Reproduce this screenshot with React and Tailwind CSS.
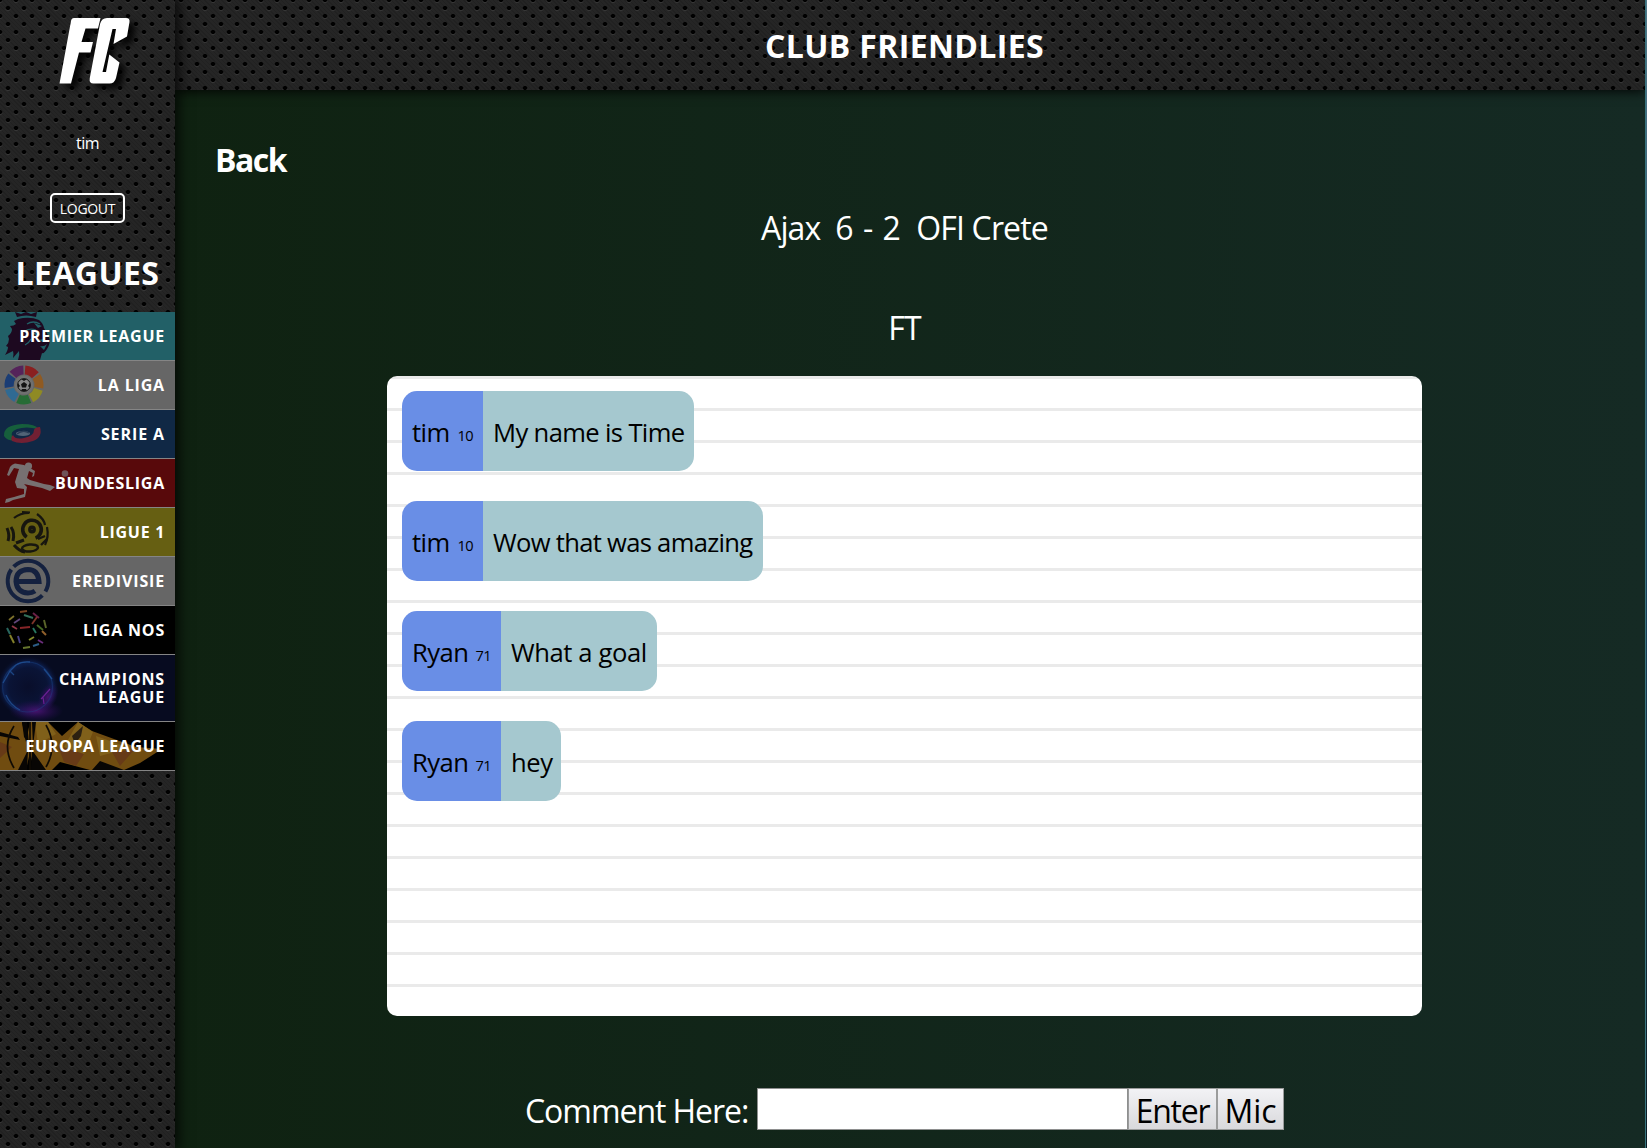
const DOTS =
  "bg-[#252525] bg-[radial-gradient(ellipse_2.8px_2.3px_at_center,#000_68%,#00000000_100%),radial-gradient(ellipse_2.8px_2.3px_at_center,#000_68%,#00000000_100%),radial-gradient(ellipse_3px_2.6px_at_center,#363636_60%,#36363600_100%),radial-gradient(ellipse_3px_2.6px_at_center,#363636_60%,#36363600_100%),repeating-linear-gradient(45deg,#0000001c_0_1px,transparent_1px_3px)] bg-size-[16px_16px,16px_16px,16px_16px,16px_16px,auto]";
const SIDE_POS = "bg-position-[-8px_-8px,0px_0px,-8px_-7px,0px_1px,0_0]";
const HEAD_POS = "bg-position-[-2px_-8px,6px_0px,-2px_-7px,6px_1px,0_0]";

function FcLogo() {
  return (
    <svg width="90" height="84" viewBox="0 0 90 84" className="drop-shadow-[6px_5px_3px_rgba(0,0,0,0.85)]" aria-label="FC">
      <g fill="#fff">
        <path d="M32 2 H58.500 L56 12.500 H43.500 L39.500 26 H51 L48.500 36.500 H37 L29 67.500 H17.500 L29 5 Q29.500 2 32 2Z" />
        <path d="M65 2 H84 Q88 2 87.500 6 L85 20.500 L71.500 28 L74 13 H70.500 L60.500 56 H64 L67.300 38.500 L77.500 46.500 L74 62 Q72.500 67.500 67.500 67.500 H51.500 Q47 67.500 47.700 62.500 L58 8 Q59.500 2 65 2Z" />
      </g>
    </svg>
  );
}

const S = ({ children, h = 48 }) => (
  <svg className="absolute left-0 top-0" width="175" height={h} viewBox={"0 0 175 " + h} fill="none">{children}</svg>
);

function Lion() {
  return (
    <S>
      <path fill="#1d0920" d="M15 0 L17 5 Q26 2 36 5 L37 0 L31 2 L26 0 L21 2Z" />
      <path fill="#1d0920" d="M18 7 Q30 4 39 8 Q43 11 44 16 L49 25 Q51 31 47 37 Q44 42 42 41 L40 48 H18 Q20 43 19 39 L13 46 Q14 42 13 39 L5 43 Q8 38 8 35 L6 34 Q9 31 9 27 L8 24 Q12 21 12 17 L10 14 Q14 14 16 12 L14 9Z" />
      <path stroke="#226067" strokeWidth="1.300" d="M27 12 Q33 8 40 12 M25 19 Q30 16 36 18 M31 27 Q29 31 25 33" />
      <path fill="#226067" d="M34 11 L42 14 L38 16Z M31 20 L40 22 L37 24Z M37 28 L45 27 L43 30Z M40 34 Q44 35 47 32 L44 38Z" />
    </S>
  );
}

function LaLiga() {
  const colors = ["#8a2020", "#8f5a22", "#8f8a24", "#276c35", "#2f6a93", "#1b3d75", "#55235a"];
  return (
    <S>
      {colors.map((c, i) => (
        <circle key={c} cx="24" cy="24" r="15" stroke={c} strokeWidth="9" pathLength="70" strokeDasharray="8.800 61.200" transform={"rotate(" + (-86 + i * 51.430) + " 24 24)"} />
      ))}
      <circle cx="24" cy="24" r="9.500" fill="#707070" />
      <circle cx="24" cy="24" r="6.400" fill="#898989" stroke="#151515" strokeWidth="1" />
      <path fill="#151515" d="M24 21 L27 23.200 L26 26.500 H22 L21 23.200Z M21 18 L27 18 L24 20Z M18 22 L20 25 L18 27Z M30 22 L28 25 L30 27Z M21 30 L22 28 L26 28 L27 30Z" />
    </S>
  );
}

function SerieA() {
  return (
    <S>
      <path fill="#165f3c" d="M4 26 Q3 15 22 14 Q36 14 38 19 Q26 16 17 19 Q9 22 13 27 L18 30 Q8 32 4 26Z" />
      <path fill="#722033" d="M40 17 Q43 27 33 31 Q21 35 12 31 Q10 28 13 25 Q15 30 24 28 Q34 26 34 20 Q35 17 40 17Z" />
      <ellipse cx="23" cy="23.500" rx="7" ry="2.600" fill="#526477" />
      <path stroke="#283c55" strokeWidth="1.300" d="M17 24 Q23 19 29 23" />
    </S>
  );
}

function Bundesliga() {
  return (
    <S>
      <g fill="#777071">
        <circle cx="28.500" cy="7" r="3.600" />
        <circle cx="65" cy="14.500" r="3.300" fill="#70545a" />
        <path d="M24 6 L15 4.500 Q12 5 10 8 L7 16 L9 17 L14 9 L19 10 L15 23 L17 29 L24 30 L24 35 L14 38 L6 40 L5 44 L9 43 L13 41 L25 38 L27 28 L24 25 L42 29 L50 32 L55 28 L50 26 L44 25 L30 21 L27 19 L29 12 L33 14 L32 18 L34 17 L35 12 L30 9Z" />
      </g>
    </S>
  );
}

function Ligue1() {
  return (
    <S>
      <g stroke="#17160f">
        <circle cx="32" cy="21.500" r="9.300" strokeWidth="3.600" pathLength="100" strokeDasharray="84 16" transform="rotate(125 32 21.500)" />
        <circle cx="32" cy="21.500" r="2.200" strokeWidth="3.400" />
        <path strokeWidth="2.200" d="M14 10 Q20 5 29 5 M22 4 L30 4.500 M37 6 Q44 11 45 17 M47 19 Q49 29 45 37" />
        <path strokeWidth="3" d="M11 19 Q15 25 13 33 M7 20 Q10 27 8 33 M16 35 L24 32 M14 37 Q19 43 25 44" />
        <ellipse cx="30" cy="40" rx="8" ry="3.500" strokeWidth="2.500" transform="rotate(-5 30 40)" />
        <path strokeWidth="2.400" d="M38 31 L45 28 M41 37 L47 31" />
      </g>
    </S>
  );
}

function Eredivisie() {
  return (
    <S>
      <g stroke="#14213f">
        <circle cx="28" cy="24" r="20.300" strokeWidth="4" pathLength="100" strokeDasharray="46 4 47 3" transform="rotate(-135 28 24)" />
        <path strokeWidth="5" d="M16 24.500 H39 Q38 12.500 28 12.500 Q16 13 16 24.500 Q17 35.500 28 36 Q32 36 35 34" />
        <path strokeWidth="2.600" d="M22 24 H39" />
      </g>
    </S>
  );
}

function LigaNos() {
  const dash = [["M9 14 L14 10", "#7e722c"], ["M20 6 L27 5", "#774221"], ["M33 7 L39 12", "#6b2148"], ["M14 17 L20 13", "#60467a"], ["M20 22 L30 21", "#862528"], ["M32 18 L37 11", "#7e3529"], ["M24 9 L33 12", "#337059"], ["M44 14 L46 22", "#5a652a"], ["M7 22 L10 28", "#28665e"], ["M10 29 L14 37", "#83802b"], ["M18 30 L20 37", "#474086"], ["M29 34 L34 31", "#848a2c"], ["M33 22 L36 27", "#277761"], ["M42 25 L46 29", "#92612b"], ["M38 34 L43 37", "#6b2d7b"], ["M23 42 L30 41", "#65752e"], ["M33 40 L39 38", "#2c5d87"], ["M12 20 L17 23", "#913846"], ["M37 19 L43 24", "#466824"]];
  return <S>{dash.map(([d, c]) => <path key={d} d={d} stroke={c} strokeWidth="1.900" />)}</S>;
}

function Champions() {
  return (
    <S h={66}>
      <defs>
        <radialGradient id="clGlow"><stop offset="0" stopColor="#090e2a" /><stop offset=".62" stopColor="#0a1436" /><stop offset=".8" stopColor="#0d1f4e" /><stop offset="1" stopColor="#080d28" stopOpacity="0" /></radialGradient>
        <radialGradient id="clPink"><stop offset="0" stopColor="#46126c" /><stop offset="1" stopColor="#2a0d58" stopOpacity="0" /></radialGradient>
      </defs>
      <circle cx="28" cy="32" r="31" fill="url(#clGlow)" />
      <ellipse cx="36" cy="56" rx="27" ry="11" fill="url(#clPink)" />
      <ellipse cx="48" cy="42" rx="9" ry="15" fill="url(#clPink)" transform="rotate(25 48 42)" />
      <circle cx="27.500" cy="32" r="25" stroke="#1c4b8c" strokeWidth="1.200" opacity=".35" />
      <path stroke="#2359a0" strokeWidth="1.300" opacity=".7" d="M3 28 L10 16 L16 10 M10 16 L14 20 M16 10 Q22 6 30 7 M44 14 L52 24 M6 40 Q10 50 20 55" />
      <path stroke="#6a2092" strokeWidth="1.200" d="M50 34 L43 42 L44 49 M43 42 L41 44" />
    </S>
  );
}

function Europa() {
  return (
    <S>
      <path fill="#704c10" d="M0 0 H22 L26 20 L30 0 H48 L62 14 L78 0 L92 9 L136 25 L162 27 L140 41 L124 48 H90 L60 40 L52 48 H34 L30 30 L26 48 H0Z" />
      <path fill="#80601a" d="M35 0 H48 L56 12 L38 22Z M78 0 L93 10 L84 32 L64 25Z M96 14 L130 26 L100 34Z" />
      <path fill="#673a17" d="M58 24 L84 32 L76 44 L64 40Z M0 20 L12 25 L0 36Z M112 30 L134 28 L120 44Z" />
      <path fill="#080604" d="M0 10 L18 15 L20 18 L0 14Z M22 0 H27 L29 22 L24 15Z M32 0 H36 L33 24Z M18 48 L28 28 L27 48Z M31 48 L32 28 L46 48Z M92 48 L100 39 L124 48Z" />
      <path stroke="#100b04" strokeWidth="1.700" d="M14 4 Q1 24 14 46 M46 3 Q58 24 46 45 M30 0 V48" />
      <path fill="#2b2011" d="M72 14 L83 4 L81 14 L75 22Z" />
    </S>
  );
}

const LEAGUES = [
  { name: "PREMIER LEAGUE", art: Lion, look: "h-[49px] bg-[#226067] tracking-[0.750px]" },
  { name: "LA LIGA", art: LaLiga, look: "h-[49px] bg-[#666666] tracking-[0.850px]" },
  { name: "SERIE A", art: SerieA, look: "h-[49px] bg-[#102845] tracking-[0.900px]" },
  { name: "BUNDESLIGA", art: Bundesliga, look: "h-[49px] bg-[#58090b] tracking-[0.750px]" },
  { name: "LIGUE 1", art: Ligue1, look: "h-[49px] bg-[#665f12] tracking-[0.700px]" },
  { name: "EREDIVISIE", art: Eredivisie, look: "h-[49px] bg-[#666666] tracking-[0.850px]" },
  { name: "LIGA NOS", art: LigaNos, look: "h-[49px] bg-black tracking-[0.800px]" },
  { name: "CHAMPIONS LEAGUE", art: Champions, look: "h-[67px] bg-[#070b20] tracking-[0.850px]" },
  { name: "EUROPA LEAGUE", art: Europa, look: "h-[49px] bg-black tracking-[0.630px]" },
];

const COMMENTS = [
  { user: "tim", score: 10, text: "My name is Time", box: "w-[81px] tracking-[-0.600px]", body: "w-[211px] tracking-[-0.640px]" },
  { user: "tim", score: 10, text: "Wow that was amazing", box: "w-[81px] tracking-[-0.600px]", body: "w-[280px] tracking-[-0.700px]" },
  { user: "Ryan", score: 71, text: "What a goal", box: "w-[99px] tracking-[-0.550px]", body: "w-[156px] tracking-[-0.400px]" },
  { user: "Ryan", score: 71, text: "hey", box: "w-[99px] tracking-[-0.550px]", body: "w-[60px] tracking-[-0.400px]" },
];

function Sidebar() {
  return (
    <aside className={"relative z-10 flex w-[175px] shrink-0 flex-col items-center shadow-[2px_0_12px_2px_rgba(0,0,0,0.75)] " + DOTS + " " + SIDE_POS}>
      <div className="mt-4 h-[84px] w-[90px] -translate-x-px"><FcLogo /></div>
      <p className="mt-[31px] text-base leading-6 tracking-[-0.500px]">tim</p>
      <button className="mt-[38px] h-[30px] w-[75px] rounded-[5px] border-2 border-white text-sm leading-7 tracking-[-0.300px]">LOGOUT</button>
      <h2 className="mt-[26px] text-[32px] leading-[48px] font-bold tracking-[0.400px]">LEAGUES</h2>
      <ul className="mt-[15px] w-full">
        {LEAGUES.map(({ name, art: Art, look }) => (
          <li key={name} className={"relative flex items-center justify-end overflow-hidden border-b border-[#858585] pr-2.5 text-right text-base leading-[18px] font-bold " + look}>
            <Art />
            <span className={name === "CHAMPIONS LEAGUE" ? "relative w-[120px]" : "relative whitespace-nowrap"}>{name}</span>
          </li>
        ))}
      </ul>
    </aside>
  );
}

export default function App() {
  return (
    <div className="flex h-[1148px] w-[1647px] overflow-hidden bg-[#122518] font-['Open_Sans',sans-serif] text-white">
      <Sidebar />
      <div className="flex min-w-0 flex-1 flex-col bg-linear-to-r from-[#0f2211] to-[#152a24]">
        <header className={"flex h-[90px] shrink-0 items-center justify-center pt-0.5 pr-[11px] shadow-[0_2px_10px_rgba(0,0,0,0.8)] " + DOTS + " " + HEAD_POS}>
          <h1 className="text-[32px] leading-10 font-bold tracking-[0.350px]">CLUB FRIENDLIES</h1>
        </header>
        <main className="flex flex-col items-center pr-[11px] text-[32px] leading-10">
          <a className="mt-[50px] ml-[40px] self-start font-bold tracking-[-1.500px]">Back</a>
          <div className="mt-7 flex gap-[15px]">
            <span className="tracking-[-0.900px]">Ajax</span>
            <span className="tracking-[0.500px]">6 - 2</span>
            <span className="tracking-[-0.850px]">OFI Crete</span>
          </div>
          <p className="mt-[60px] tracking-[-0.700px]">FT</p>
          <section className="mt-7 flex h-[640px] w-[1035px] flex-col gap-[30px] rounded-[10px] bg-[repeating-linear-gradient(#eaeaea_0_3px,#ffffff_3px_32px)] p-[15px] text-[25.600px] text-black">
            {COMMENTS.map((c) => (
              <div key={c.text} className="flex h-20 self-start overflow-hidden rounded-[15px] leading-[83px] whitespace-nowrap">
                <div className={"flex justify-between bg-[#698ee6] px-2.5 " + c.box}>
                  <span>{c.user}</span>
                  <span className="translate-y-[3px] text-[14.600px] tracking-[-0.600px]">{c.score}</span>
                </div>
                <div className={"bg-[#a5c8cf] pl-2.5 " + c.body}>{c.text}</div>
              </div>
            ))}
          </section>
          <form className="mt-[72px] flex h-[42px] items-center self-start pl-[350px]">
            <label className="w-[232px] pt-[3px] whitespace-nowrap tracking-[-1.050px]">Comment Here:</label>
            <input className="h-[42px] w-[371px] border border-[#8e8f8f] bg-white text-black" />
            <button type="button" className="h-[42px] w-[89px] border border-[#9b9c9c] bg-linear-to-b from-[#f2f2f5] to-[#d9d9dc] pt-[3px] leading-[37px] tracking-[-1.250px] text-black">Enter</button>
            <button type="button" className="h-[42px] w-[67px] border border-[#9b9c9c] bg-linear-to-b from-[#f2f2f5] to-[#d9d9dc] pt-[3px] leading-[37px] text-black">Mic</button>
          </form>
        </main>
      </div>
      <div className="w-0.5 shrink-0 border-l border-[#39757f] bg-linear-to-b from-[#54788a] via-[#1d4360] to-[#0b1c25]" />
    </div>
  );
}
